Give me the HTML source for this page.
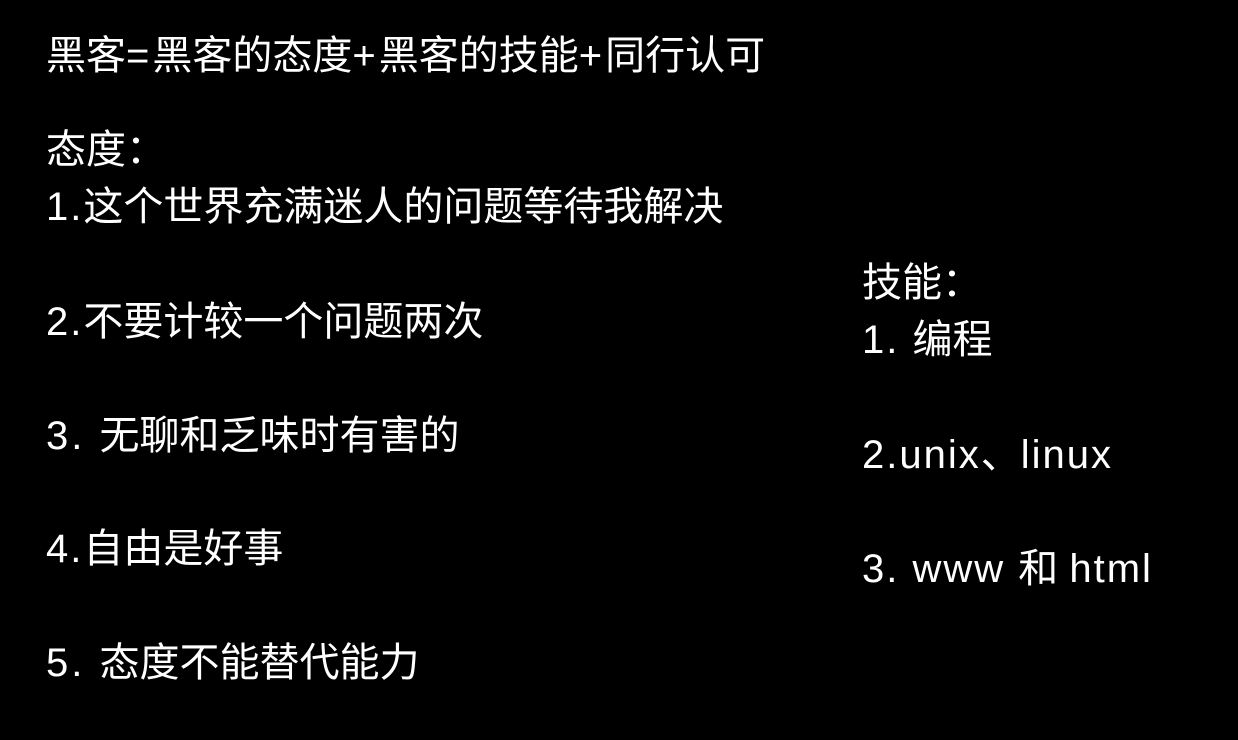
<!DOCTYPE html>
<html><head><meta charset="utf-8"><style>
html,body{margin:0;padding:0;background:#000;width:1238px;height:740px;overflow:hidden}
div{position:absolute;color:#fff;font-family:"Liberation Sans","Noto Sans CJK SC",sans-serif;font-size:40px;line-height:40px;white-space:nowrap}
.l{letter-spacing:2px}
.s{letter-spacing:3px}
</style></head><body>
<div style="left:46px;top:36px">黑客<span class="s">=</span>黑客的态度<span class="s">+</span>黑客的技能<span class="s">+</span>同行认可</div>
<div style="left:46px;top:130px">态度：</div>
<div style="left:46px;top:187px"><span class="l">1.</span>这个世界充满迷人的问题等待我解决</div>
<div style="left:46px;top:302px"><span class="l">2.</span>不要计较一个问题两次</div>
<div style="left:46px;top:416px"><span class="s">3. </span>无聊和乏味时有害的</div>
<div style="left:46px;top:529px"><span class="l">4.</span>自由是好事</div>
<div style="left:46px;top:643px"><span class="s">5. </span>态度不能替代能力</div>
<div style="left:862px;top:263px">技能：</div>
<div style="left:862px;top:320px"><span class="l">1. </span>编程</div>
<div style="left:862px;top:435px"><span class="l">2.unix</span>、<span class="l">linux</span></div>
<div style="left:862px;top:549px"><span class="l">3. www </span>和 <span class="l">html</span></div>
</body></html>
